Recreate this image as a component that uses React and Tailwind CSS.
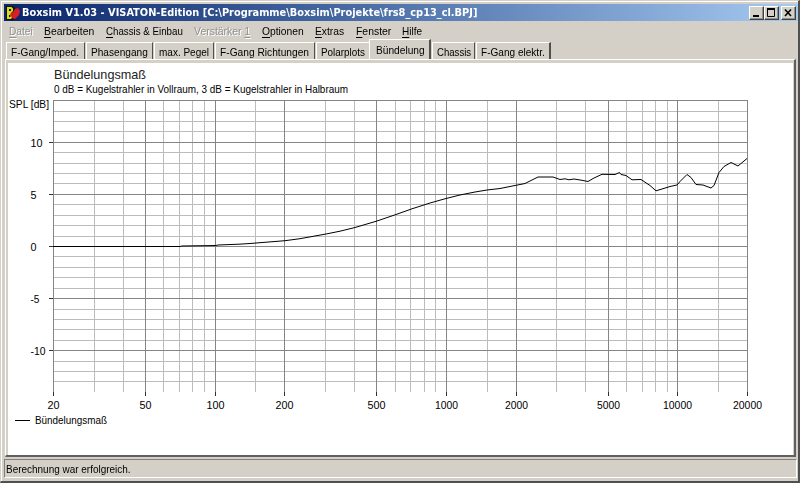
import { useLayoutEffect, useRef } from "react";

// Text squeezed or stretched horizontally to an exact width.
function Fit({ w, className = "", children }) {
  const box = useRef(null);
  const inner = useRef(null);
  useLayoutEffect(() => {
    const natural = inner.current.offsetWidth;
    box.current.style.width = w + "px";
    inner.current.style.transform = `scaleX(${w / natural})`;
  }, [w]);
  return (
    <span ref={box} className={`inline-block shrink-0 whitespace-nowrap ${className}`}>
      <span ref={inner} className="inline-block origin-left whitespace-pre">{children}</span>
    </span>
  );
}

const menus = [
  ["D", "atei", 24, true],
  ["B", "earbeiten", 50],
  ["C", "hassis & Einbau", 77],
  ["", "Verstärker ", 56, true, "1"],
  ["O", "ptionen", 42],
  ["E", "xtras", 29],
  ["F", "enster", 35],
  ["H", "ilfe", 20],
];

function Tab({ label, w, className }) {
  return (
    <div className={`flex h-[17px] shrink-0 items-center border-t border-l border-t-white border-r-[#505050] border-l-white pt-px pl-[4px] ${className}`}>
      <Fit w={w}>{label}</Fit>
    </div>
  );
}

const X0 = 53.5;
const DEC = 694 / 3;
const px = (f) => Math.floor(X0 + DEC * Math.log10(f / 20)) + 0.5;
const py = (db) => Math.round(246 - db * 10.42) + 0.5;
const minorF = [30, 40, 60, 70, 80, 90, 150, 300, 400, 600, 700, 800, 900, 1500, 3000, 4000, 6000, 7000, 8000, 9000, 15000];
const majorF = [[20, 12], [50, 12], [100, 18], [200, 18], [500, 18], [1000, 23], [2000, 23], [5000, 23], [10000, 29], [20000, 29]];
const levels = Array.from({ length: 28 }, (_, i) => 14 - i);
const dbLabels = [[10, 12], [5, 6], [0, 6], [-5, 9], [-10, 15]];
const curve =
  "53,246 180,246 182,245.5 216,245 218,244.5 239,243.7 250,243 285,240.2 300,238.2 326,233.5 340,230.7 355,227 377,220.5 396,214 412,208.3 430,202.5 446,198 460,194.5 475,191.5 487,189.5 500,188 515,185 525,183 531,180 538,176.5 553,176.5 560,179 565,178.3 569,179.3 574,178.5 582,179.8 588,181 594,177.5 602,173.8 615,174 619.5,172 621,174 626,175 632,179.3 641,179 650,185 656,190.3 662,188.5 670,186 677,184.5 680,181 687,174 691,177 696,184 703,184.5 711,187.5 714,185 719,172 724,166 731,162 738,165.5 747,158";

function Chart() {
  return (
    <svg width="785" height="392" viewBox="8 63 785 392" className="block text-[11px]" fill="#000">
      <text x="54" y="79" fontSize="13" fill="#222" textLength="92" lengthAdjust="spacingAndGlyphs">Bündelungsmaß</text>
      <text x="54" y="93" textLength="294" lengthAdjust="spacingAndGlyphs">0 dB = Kugelstrahler in Vollraum, 3 dB = Kugelstrahler in Halbraum</text>
      <text x="9" y="108" textLength="40" lengthAdjust="spacingAndGlyphs">SPL [dB]</text>
      <g stroke="#bcbcbc">
        {levels.map((l) => <line key={l} x1="53" x2="748" y1={py(l)} y2={py(l)} />)}
        {minorF.map((f) => <line key={f} x1={px(f)} x2={px(f)} y1="100" y2="392" />)}
      </g>
      <g stroke="#858585">
        <line x1="53" x2="748" y1="100.5" y2="100.5" />
        {dbLabels.map(([l]) => <line key={l} x1="53" x2="748" y1={py(l)} y2={py(l)} />)}
        {majorF.map(([f]) => <line key={f} x1={px(f)} x2={px(f)} y1="100" y2="392" />)}
      </g>
      <g stroke="#303030">
        {majorF.map(([f]) => <line key={f} x1={px(f)} x2={px(f)} y1="392" y2="396" />)}
        {dbLabels.map(([l]) => <line key={l} x1="49" x2="53" y1={py(l)} y2={py(l)} />)}
      </g>
      {majorF.map(([f, w]) => (
        <text key={f} x={px(f) - w / 2} y="409" textLength={w} lengthAdjust="spacingAndGlyphs">{f}</text>
      ))}
      {dbLabels.map(([l, w]) => (
        <text key={l} x="30.5" y={py(l) + 4} textLength={w} lengthAdjust="spacingAndGlyphs">{l}</text>
      ))}
      <polyline points={curve} transform="translate(0 .5)" fill="none" stroke="#000" strokeWidth="1" />
      <line x1="15" x2="30" y1="420.5" y2="420.5" stroke="#000" />
      <text x="35" y="424" textLength="72" lengthAdjust="spacingAndGlyphs">Bündelungsmaß</text>
    </svg>
  );
}

export default function App() {
  return (
    <div className="flex h-[483px] w-[800px] flex-col overflow-hidden border-t border-r-2 border-b-2 border-l border-t-[#d4d0c8] border-r-[#505050] border-b-[#505050] border-l-[#d4d0c8] bg-[#d4d0c8] font-['Liberation_Sans',sans-serif] text-[11px] leading-[14px] text-black">
      <div className="flex grow flex-col border-t border-l border-white pt-[2px]">
        <div className="ml-[2px] flex h-[17px] w-[794px] shrink-0 items-center bg-linear-to-r from-[#0a246a] to-[#a6caf0] pr-[2px] pl-px">
          <svg width="16" height="16" viewBox="0 0 16 16" className="mr-px shrink-0">
            <path d="M1 1h7l2 2v4l-1 1 1 2v4l-2 1H1z" fill="#171700" />
            <path d="M2 2h4.500l1.500 1.500v2.500L6 8l1.500 1.500v2.500L6 14H2z" fill="#d8dc20" />
            <path d="M4 4h2v2H4zM4 10h1.500v2H4z" fill="#171700" />
            <path d="M8 7l2-3 3-1 2 3-1 4-4 4-3-1-2-4 1-1z" fill="#e01c28" />
            <path d="M6 9.500l2 1 4-6" fill="none" stroke="#a03818" />
          </svg>
          <Fit w={455} className="font-['DejaVu_Sans_Condensed','DejaVu_Sans',sans-serif] font-bold text-white">
            Boxsim V1.03 - VISATON-Edition [C:\Programme\Boxsim\Projekte\frs8_cp13_cl.BPJ]
          </Fit>
          <div className="ml-auto flex">
            {["min", "max", "close"].map((k) => (
              <div key={k} className={`flex h-[14px] w-[15px] border border-t-white border-r-[#404040] border-b-[#404040] border-l-white bg-[#d4d0c8] shadow-[inset_-1px_-1px_#909090] ${k === "close" ? "ml-[2px]" : ""}`}>
                <svg width="13" height="12" viewBox="0 0 13 12" stroke="#000" fill="none">
                  {k === "min" && <path d="M3 9h6" strokeWidth="2" />}
                  {k === "max" && <path d="M2.500 2v7.500h7V2" />}
                  {k === "max" && <path d="M2 2h8" strokeWidth="2" />}
                  {k === "close" && <path d="M3 2.500l6 6.500M9 2.500l-6 6.500" strokeWidth="1.6" />}
                </svg>
              </div>
            ))}
          </div>
        </div>
        <div className="flex h-[18px] shrink-0 items-center gap-[11.500px] pt-px pl-[6.500px]">
          {menus.map(([u, rest, w, off, tail]) => (
            <Fit key={rest} w={w} className={off ? "text-[#929292] [text-shadow:1px_1px_#fff]" : ""}>
              <span className="underline underline-offset-2">{u}</span>{rest}
              {tail && <span className="underline underline-offset-2">{tail}</span>}
            </Fit>
          ))}
        </div>
        <div className="flex h-[20px] shrink-0 items-end pl-[4px]">
          <Tab label="F-Gang/Imped." w={68} className="w-[79px] border-r" />
          <Tab label="Phasengang" w={57} className="ml-px w-[67px] border-r" />
          <Tab label="max. Pegel" w={50} className="ml-px w-[60px] border-r" />
          <Tab label="F-Gang Richtungen" w={89} className="ml-px w-[100px] border-r" />
          <Tab label="Polarplots" w={44} className="ml-px w-[53px]" />
          <Tab label="Bündelung" w={49} className="h-[20px] w-[62px] border-r-2 pb-px pl-[6px]" />
          <Tab label="Chassis" w={34} className="ml-px w-[43px] border-r" />
          <Tab label="F-Gang elektr." w={64} className="ml-px w-[75px] border-r-2" />
        </div>
        <div className="ml-[3px] flex h-[398px] w-[791px] shrink-0 border-t border-r-2 border-b-2 border-l border-t-white border-r-[#606060] border-b-[#606060] border-l-white pt-[3px] pl-[2px]">
          <div className="h-[392px] w-[785px] bg-white"><Chart /></div>
        </div>
        <div className="mt-[2px] ml-[2px] flex h-[19px] w-[793px] shrink-0 items-center border border-t-[#808080] border-r-white border-b-white border-l-[#808080] pt-px pl-px">
          <Fit w={125}>Berechnung war erfolgreich.</Fit>
        </div>
      </div>
    </div>
  );
}
